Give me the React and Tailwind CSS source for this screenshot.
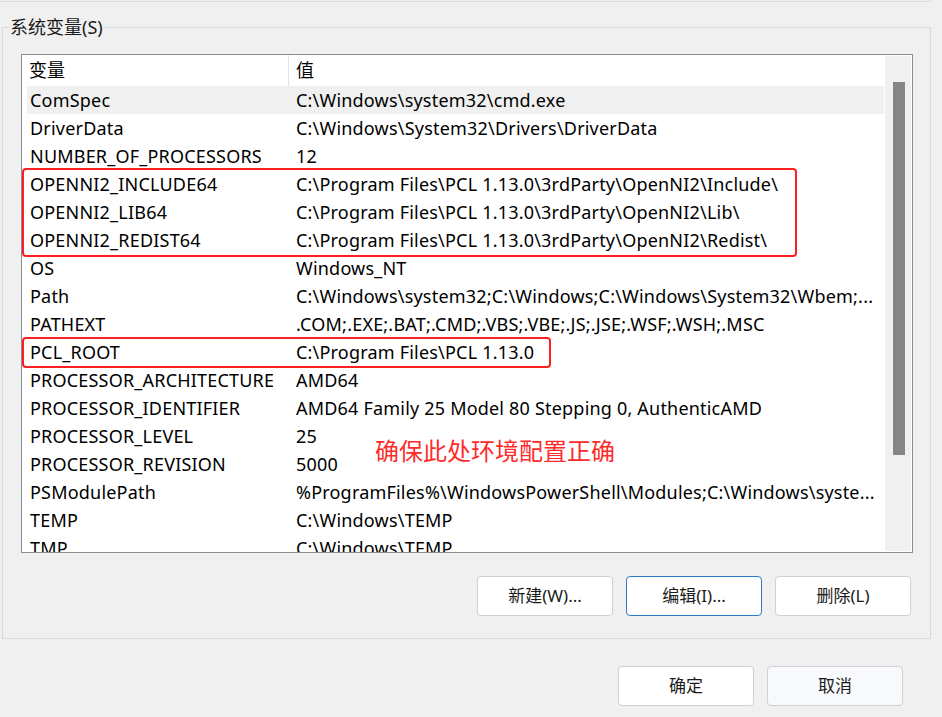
import React from 'react';

const rows = [
  ['ComSpec', 'C:\\Windows\\system32\\cmd.exe'],
  ['DriverData', 'C:\\Windows\\System32\\Drivers\\DriverData'],
  ['NUMBER_OF_PROCESSORS', '12'],
  ['OPENNI2_INCLUDE64', 'C:\\Program Files\\PCL 1.13.0\\3rdParty\\OpenNI2\\Include\\'],
  ['OPENNI2_LIB64', 'C:\\Program Files\\PCL 1.13.0\\3rdParty\\OpenNI2\\Lib\\'],
  ['OPENNI2_REDIST64', 'C:\\Program Files\\PCL 1.13.0\\3rdParty\\OpenNI2\\Redist\\'],
  ['OS', 'Windows_NT'],
  ['Path', 'C:\\Windows\\system32;C:\\Windows;C:\\Windows\\System32\\Wbem;...'],
  ['PATHEXT', '.COM;.EXE;.BAT;.CMD;.VBS;.VBE;.JS;.JSE;.WSF;.WSH;.MSC'],
  ['PCL_ROOT', 'C:\\Program Files\\PCL 1.13.0'],
  ['PROCESSOR_ARCHITECTURE', 'AMD64'],
  ['PROCESSOR_IDENTIFIER', 'AMD64 Family 25 Model 80 Stepping 0, AuthenticAMD'],
  ['PROCESSOR_LEVEL', '25'],
  ['PROCESSOR_REVISION', '5000'],
  ['PSModulePath', '%ProgramFiles%\\WindowsPowerShell\\Modules;C:\\Windows\\syste...'],
  ['TEMP', 'C:\\Windows\\TEMP'],
  ['TMP', 'C:\\Windows\\TEMP'],
];

const font = { fontFamily: '"Noto Sans", "Noto Sans CJK SC", sans-serif' };

const Button = ({ children, focused, soft }) => (
  <button
    className={
      'w-[136px] h-[40px] rounded-[4px] border text-[17px] text-[#1b1b1b] flex items-center justify-center ' +
      (focused ? 'border-[#2a78c6] bg-white' : soft ? 'border-[#d0d0d0] bg-[#f7f9fc]' : 'border-[#d0d0d0] bg-white')
    }
  >
    {children}
  </button>
);

export default function App() {
  return (
    <div className="w-[942px] h-[717px] bg-[#f0f0f0] overflow-hidden text-black" style={font}>
      {/* bottom edge of the user variables group above */}
      <div className="h-[2px] w-[931px] border-b border-r border-[#d9d9d9]" />

      {/* system variables group */}
      <div className="relative ml-[2px] mt-[25px] w-[929px] h-[612px] border border-[#d9d9d9]">
        <span className="absolute left-[6px] top-[-13px] bg-[#f0f0f0] px-[1px] text-[18px] leading-[24px] text-[#1b1b1b]">
          系统变量(S)
        </span>

        <div className="relative ml-[18px] mt-[26px] w-[892px] h-[499px] border border-[#8a8d93] bg-white flex">
          <div className="w-[862px] overflow-hidden">
            {/* header */}
            <div className="h-[31px] flex items-center text-[18px]">
              <div className="w-[266px] pl-[7px]">变量</div>
              <div className="w-px h-full bg-[#e5e5e5]" />
              <div className="pl-[7px]">值</div>
            </div>
            {rows.map(([name, value], i) => (
              <div
                key={name}
                className={'ml-[5px] h-[28px] flex items-center text-[18px] tracking-[0.2px] whitespace-nowrap ' + (i === 0 ? 'bg-[#f0f0f0]' : '')}
              >
                <div className="w-[269px] shrink-0 pl-[3px]">{name}</div>
                <div>{value}</div>
              </div>
            ))}
          </div>
          {/* scrollbar */}
          <div className="ml-[1px] mt-px mb-px w-[26px] bg-[#f0f0f0]">
            <div className="ml-[8px] mt-[26px] w-[12px] h-[373px] bg-[#858585]" />
          </div>

          {/* annotations */}
          <div className="absolute left-0 top-[113px] w-[775px] h-[89px] border-2 border-[#ff1f1f] rounded-[4px]" />
          <div className="absolute left-0 top-[282px] w-[529px] h-[31px] border-2 border-[#ff1f1f] rounded-[4px]" />
          <div className="absolute left-[353px] top-[384px] text-[24px] leading-[24px] text-[#ff2b2b] whitespace-nowrap">
            确保此处环境配置正确
          </div>
        </div>

        <div className="mt-[23px] mr-[19px] flex justify-end gap-[13px]">
          <Button>新建(W)...</Button>
          <Button focused>编辑(I)...</Button>
          <Button>删除(L)</Button>
        </div>
      </div>

      <div className="mt-[27px] mr-[39px] flex justify-end gap-[13px]">
        <Button>确定</Button>
        <Button soft>取消</Button>
      </div>
    </div>
  );
}
